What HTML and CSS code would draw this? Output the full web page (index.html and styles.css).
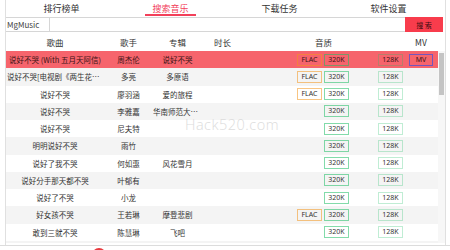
FILE: index.html
```html
<!DOCTYPE html>
<html lang="zh-CN">
<head>
    <meta charset="UTF-8">
    <meta name="viewport" content="width=device-width, initial-scale=1.0">
    <title>MgMusic</title>
    <link rel="stylesheet" href="styles.css">
</head>
<body>

<div class="app">
    <!-- top navigation -->
    <div class="tabs">
        <div class="tab">排行榜单</div>
        <div class="tab active">搜索音乐</div>
        <div class="tab">下载任务</div>
        <div class="tab">软件设置</div>
    </div>

    <!-- search bar -->
    <div class="search-bar">
        <div class="field">
            <span class="source">MgMusic</span>
            <input class="keyword" type="text">
        </div>
        <button class="search-btn">搜 索</button>
    </div>

    <!-- result list -->
    <div class="row head">
        <span>歌曲</span>
        <span>歌手</span>
        <span>专辑</span>
        <span>时长</span>
        <span>音质</span>
        <span>MV</span>
    </div>
    <div class="list">
        <div class="list-body">
            <div class="row selected">
                <span class="title">说好不哭 (With 五月天阿信)</span>
                <span>周杰伦</span>
                <span>说好不哭</span>
                <span></span>
                <span class="quality"><i class="tag flac">FLAC</i><i class="tag k320">320K</i><i class="tag blank"></i><i class="tag k128">128K</i></span>
                <span class="mv"><i class="tag mv-tag">MV</i></span>
            </div>
            <div class="row">
                <span class="title">说好不哭[电视剧《两生花》插曲]</span>
                <span>多亮</span>
                <span>多原语</span>
                <span></span>
                <span class="quality"><i class="tag flac">FLAC</i><i class="tag k320">320K</i><i class="tag blank"></i><i class="tag k128">128K</i></span>
                <span class="mv"></span>
            </div>
            <div class="row">
                <span class="title">说好不哭</span>
                <span>廖羽涵</span>
                <span>爱的旅程</span>
                <span></span>
                <span class="quality"><i class="tag flac">FLAC</i><i class="tag k320">320K</i><i class="tag blank"></i><i class="tag k128">128K</i></span>
                <span class="mv"></span>
            </div>
            <div class="row">
                <span class="title">说好不哭</span>
                <span>李雅嘉</span>
                <span>华南师范大学毕业歌</span>
                <span></span>
                <span class="quality"><i class="tag k320">320K</i><i class="tag blank"></i><i class="tag k128">128K</i></span>
                <span class="mv"></span>
            </div>
            <div class="row">
                <span class="title">说好不哭</span>
                <span>尼夫特</span>
                <span></span>
                <span></span>
                <span class="quality"><i class="tag k320">320K</i><i class="tag blank"></i><i class="tag k128">128K</i></span>
                <span class="mv"></span>
            </div>
            <div class="row">
                <span class="title">明明说好不哭</span>
                <span>雨竹</span>
                <span></span>
                <span></span>
                <span class="quality"><i class="tag k320">320K</i><i class="tag blank"></i><i class="tag k128">128K</i></span>
                <span class="mv"></span>
            </div>
            <div class="row">
                <span class="title">说好了我不哭</span>
                <span>何如惠</span>
                <span>风花雪月</span>
                <span></span>
                <span class="quality"><i class="tag k320">320K</i><i class="tag blank"></i><i class="tag k128">128K</i></span>
                <span class="mv"></span>
            </div>
            <div class="row">
                <span class="title">说好分手那天都不哭</span>
                <span>叶郁有</span>
                <span></span>
                <span></span>
                <span class="quality"><i class="tag k320">320K</i><i class="tag blank"></i><i class="tag k128">128K</i></span>
                <span class="mv"></span>
            </div>
            <div class="row">
                <span class="title">说好了不哭</span>
                <span>小龙</span>
                <span></span>
                <span></span>
                <span class="quality"><i class="tag k320">320K</i><i class="tag blank"></i><i class="tag k128">128K</i></span>
                <span class="mv"></span>
            </div>
            <div class="row">
                <span class="title">好女孩不哭</span>
                <span>王若琳</span>
                <span>摩登悲剧</span>
                <span></span>
                <span class="quality"><i class="tag flac">FLAC</i><i class="tag k320">320K</i><i class="tag blank"></i><i class="tag k128">128K</i></span>
                <span class="mv"></span>
            </div>
            <div class="row">
                <span class="title">敢到三就不哭</span>
                <span>陈慧琳</span>
                <span>飞吧</span>
                <span></span>
                <span class="quality"><i class="tag k320">320K</i><i class="tag blank"></i><i class="tag k128">128K</i></span>
                <span class="mv"></span>
            </div>
            <!-- next row, only its top edge peeks out -->
            <div class="row">
                <span class="title"></span>
                <span></span>
                <span></span>
                <span></span>
                <span class="quality"><i class="tag k320"></i><i class="tag blank"></i><i class="tag k128"></i></span>
                <span class="mv"></span>
            </div>
        </div>
        <div class="scrollbar"><div class="thumb"></div></div>
    </div>
</div>

<!-- player strip, mostly below the fold -->
<div class="player">
    <span class="play-btn"></span>
</div>

<div class="watermark">Hack520.com</div>

</body>
</html>
```

FILE: styles.css
```css
body {
    margin: 0;
    font-family: "Noto Sans CJK SC", "Noto Sans", sans-serif;
    color: #333;
    background: #fff;
    overflow: hidden;
}

.app {
    margin-left: 5px;
    width: 441px;
    height: 245px;
    box-sizing: border-box;
    border-left: 1px solid #e0e0e0;
    border-right: 1px solid #e0e0e0;
}

/* tabs */
.tabs {
    display: flex;
    height: 17px;
    padding-left: 1px;
}

.tab {
    position: relative;
    width: 109px;
    display: flex;
    justify-content: center;
    align-items: center;
    font-size: 9px;
    color: #333;
}

.tab.active {
    color: #f2405a;
}

.tab.active::after {
    content: '';
    position: absolute;
    left: 29px;
    right: 29px;
    bottom: 1px;
    height: 2px;
    background: #f2405a;
}

/* search */
.search-bar {
    display: flex;
    height: 15px;
    padding-right: 2px;
}

.field {
    flex: 1;
    display: flex;
    border-top: 1px solid #d6d6d6;
    border-bottom: 1px solid #d6d6d6;
}

.source {
    width: 44px;
    box-sizing: border-box;
    padding-left: 1px;
    border-right: 1px solid #d6d6d6;
    font-size: 8px;
    line-height: 13px;
    color: #444;
}

.keyword {
    flex: 1;
    border: none;
    outline: none;
    padding: 0;
    height: 13px;
    background: transparent;
}

.search-btn {
    width: 38px;
    height: 15px;
    padding: 0;
    border: none;
    background: #f83c4c;
    color: #3a0c10;
    font-family: inherit;
    font-size: 7px;
}

/* list */
.row {
    display: grid;
    grid-template-columns: 98px 49px 49px 41px 161px 34px;
    align-items: center;
    height: 17.25px;
    font-size: 7.5px;
    text-align: center;
}

.row span {
    white-space: nowrap;
    overflow: hidden;
    text-overflow: ellipsis;
}

.row.head {
    height: 19px;
    font-size: 8.5px;
    color: #333;
}

.list {
    display: flex;
    height: 192px;
}

.list-body {
    width: 432px;
    overflow: hidden;
}

.list-body .row:nth-child(even) {
    background: #f4f4f4;
}

.list-body .row.selected {
    background: #f6646c;
    color: #3a1416;
}

.title {
    padding: 0 1px;
}

.quality {
    display: flex;
    justify-content: flex-end;
    gap: 2px;
    padding-right: 1px;
}

.mv {
    display: flex;
    justify-content: center;
}

.tag {
    display: block;
    width: 25px;
    height: 12px;
    box-sizing: border-box;
    border: 1px solid transparent;
    font-style: normal;
    font-family: "Noto Sans", sans-serif;
    font-size: 7px;
    line-height: 10px;
    text-align: center;
    color: #333;
}

.tag.flac {
    border-color: rgba(243, 150, 30, 0.55);
}

.tag.k320 {
    border-color: rgba(30, 190, 100, 0.55);
}

.tag.k128 {
    border-color: rgba(30, 190, 100, 0.28);
}

.tag.blank {
    visibility: hidden;
}

.tag.mv-tag {
    width: 24px;
    border-color: rgba(60, 80, 225, 0.7);
}

.selected .tag {
    color: #3a1416;
}

.scrollbar {
    width: 7px;
    background: #f7f7f7;
}

.thumb {
    margin: 2px 1px 0;
    height: 42px;
    background: #c4c4c4;
}

/* bottom */
.player {
    border-top: 1px solid #dcdcdc;
    height: 10px;
    padding-left: 92px;
}

.play-btn {
    display: block;
    margin-top: 2px;
    width: 14px;
    height: 14px;
    border-radius: 50%;
    background: #e8383d;
}

.watermark {
    position: absolute;
    left: 185px;
    top: 118px;
    font-family: "Open Sans", sans-serif;
    font-weight: 300;
    font-size: 14.5px;
    line-height: 14px;
    letter-spacing: 0.5px;
    color: #dcdcdc;
}
```
